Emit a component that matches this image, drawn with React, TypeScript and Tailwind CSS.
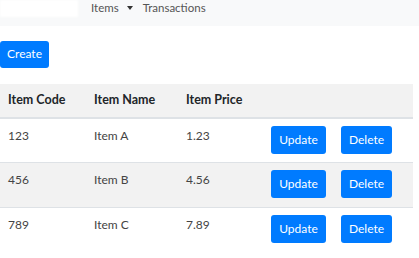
import React from "react";

const rows = [
  { code: "123", name: "Item A", price: "1.23", bg: "bg-white" },
  { code: "456", name: "Item B", price: "4.56", bg: "bg-[#f2f2f2]" },
  { code: "789", name: "Item C", price: "7.89", bg: "bg-white" },
];

function Btn({ w, children }: { w: string; children: React.ReactNode }) {
  return (
    <button className={`${w} h-[28px] rounded-[3px] bg-[#007bff] text-white text-[12px] leading-none`}>
      {children}
    </button>
  );
}

export default function App() {
  return (
    <div className="w-[419px] h-[258px] bg-white overflow-hidden text-[#212529]" style={{ fontFamily: 'Lato, "Open Sans", sans-serif' }}>
      <nav className="h-[26px] bg-[#f8f9fa] flex items-start">
        <div className="w-[78px] h-[17px] bg-white blur-[1px]" />
        <div className="ml-[13px] flex items-center h-[15px] text-[11.5px] leading-[15px] text-[#555]">
          <span>Items</span>
          <svg className="ml-[8px]" width="6" height="4" viewBox="0 0 6 4"><path d="M0 0h6L3 4z" fill="#333" /></svg>
          <span className="ml-[10px]">Transactions</span>
        </div>
      </nav>
      <div className="mt-[14px]">
        <button className="w-[49px] h-[27px] rounded-[3px] bg-[#007bff] text-white text-[12px] leading-none">Create</button>
      </div>
      <table className="mt-[16px] w-[413px] table-fixed border-collapse text-[12px] text-[#444]">
        <colgroup>
          <col className="w-[86px]" />
          <col className="w-[92px]" />
          <col className="w-[85px]" />
          <col className="w-[70px]" />
          <col className="w-[80px]" />
        </colgroup>
        <thead>
          <tr className="bg-[#f2f2f2] h-[34px] border-b-[2px] border-[#dee2e6]">
            <th className="text-left font-bold px-[8px] align-middle text-[#212529] text-[12.5px]">Item Code</th>
            <th className="text-left font-bold px-[8px] align-middle text-[#212529] text-[12.5px]">Item Name</th>
            <th className="text-left font-bold px-[8px] align-middle text-[#212529] text-[12.5px]">Item Price</th>
            <th />
            <th />
          </tr>
        </thead>
        <tbody>
          {rows.map((r) => (
            <tr key={r.code} className={`${r.bg} h-[45px] border-t border-[#dee2e6] first:border-t-0`}>
              <td className="px-[8px] pt-[9px] align-top leading-[15px]">{r.code}</td>
              <td className="px-[8px] pt-[9px] align-top leading-[15px]">{r.name}</td>
              <td className="px-[8px] pt-[9px] align-top leading-[15px]">{r.price}</td>
              <td className="px-[8px] pt-[7px] align-top"><Btn w="w-[55px]">Update</Btn></td>
              <td className="px-[8px] pt-[7px] align-top"><Btn w="w-[51px]">Delete</Btn></td>
            </tr>
          ))}
        </tbody>
      </table>
    </div>
  );
}
